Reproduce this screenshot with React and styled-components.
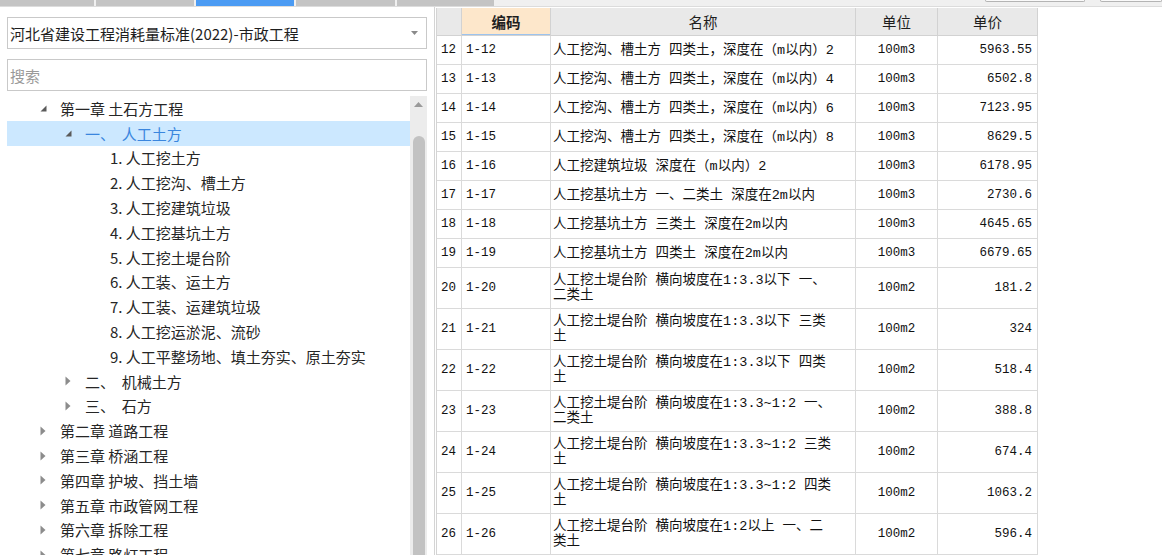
import React from 'react';
import styled, { createGlobalStyle } from 'styled-components';

const GlobalStyle = createGlobalStyle`
  html, body {
    margin: 0;
    padding: 0;
    background: #fff;
    overflow: hidden;
  }
  body {
    font-family: "Noto Sans CJK SC", "Noto Sans", sans-serif;
    color: #222;
  }
  #root {
    height: 555px;
  }
`;

const Page = styled.div`
  width: 1162px;
  height: 555px;
  display: flex;
  flex-direction: column;
  overflow: hidden;
`;

/* ---- top tab strip (only its bottom edge is visible) ---- */
const TabStrip = styled.div`
  flex: none;
  height: 6px;
  display: flex;
  gap: 2px;
  background: #f0f0f0;
  border-bottom: 1px solid #dcdcdc;
`;
const Tab = styled.div`
  width: ${p => p.$w}px;
  background: ${p => (p.$active ? '#4b9bf3' : '#c4c4c4')};
`;
const Spacer = styled.div`
  flex: 1;
`;
const ButtonStub = styled.div`
  width: ${p => p.$w}px;
  height: 1px;
  margin-left: ${p => p.$ml}px;
  border: 1px solid #b4b4b4;
  border-top: none;
  border-radius: 0 0 3px 3px;
  background: #fafafa;
`;

const Main = styled.div`
  flex: 1;
  min-height: 0;
  display: flex;
`;

/* ---- left: standard picker + chapter tree ---- */
const LeftPanel = styled.div`
  flex: none;
  width: 427px;
  padding: 10px 0 0 7px;
  border-right: 1px solid #d4d4d4;
  display: flex;
  flex-direction: column;
  overflow: hidden;
`;
const Field = styled.div`
  width: 420px;
  height: 32px;
  box-sizing: border-box;
  border: 1px solid #c9c9c9;
  display: flex;
  align-items: center;
  padding: 0 8px 0 2px;
  font-size: 15px;
  color: ${p => (p.$placeholder ? '#9a9a9a' : '#1e1e1e')};
  margin-bottom: 10px;
  white-space: nowrap;
`;
const FieldText = styled.span`
  flex: 1;
`;
const TreeArea = styled.div`
  flex: 1;
  min-height: 0;
  margin-top: -5px;
  display: flex;
`;
const Tree = styled.div`
  width: 403px;
  flex: none;
`;
const TreeRow = styled.div`
  height: 24.8px;
  display: flex;
  align-items: center;
  padding-left: ${p => 33 + p.$level * 25}px;
  background: ${p => (p.$selected ? '#cce8ff' : 'transparent')};
  color: ${p => (p.$selected ? '#3a86de' : '#262626')};
  font-size: 15px;
  white-space: pre;
`;
const Toggle = styled.span`
  width: 20px;
  flex: none;
  display: flex;
  align-items: center;
`;
const ScrollTrack = styled.div`
  width: 17px;
  flex: none;
  background: #ececec;
  display: flex;
  flex-direction: column;
  align-items: center;
  padding-top: 6px;
`;
const ScrollThumb = styled.div`
  margin-top: 29px;
  width: 12px;
  flex: 1;
  background: #c2c2c2;
  border-radius: 6px 6px 0 0;
`;

/* ---- right: quota table ---- */
const RightPanel = styled.div`
  flex: 1;
  padding: 1px 0 0 1px;
  background: #fff;
`;
const Table = styled.div`
  width: 602px;
  border-left: 1px solid #d4d4d4;
`;
const Row = styled.div`
  display: grid;
  grid-template-columns: 25px 89px 305px 82px 100px;
  height: ${p => p.$h}px;
`;
const HeadCell = styled.div`
  display: flex;
  align-items: center;
  justify-content: center;
  border-right: 1px solid #d2d2d2;
  border-bottom: 1px solid #d2d2d2;
  background: ${p => (p.$active ? '#fde7cb' : '#e9e9e9')};
  box-shadow: ${p => (p.$active ? 'inset 0 -1px 0 #9cc3ee' : 'none')};
  font-size: 14.5px;
  font-weight: ${p => (p.$active ? 700 : 400)};
  color: #1e1e1e;
`;
const Cell = styled.div`
  display: flex;
  align-items: center;
  justify-content: ${p => p.$align || 'flex-start'};
  padding: 0 ${p => p.$pr ?? 3}px 0 ${p => p.$pl ?? 3}px;
  border-right: 1px solid #dadada;
  border-bottom: 1px solid #dadada;
  font-family: "Liberation Mono", "Noto Sans CJK SC", monospace;
  font-size: ${p => p.$fs || 12.5}px;
  line-height: 15px;
  color: #111;
  white-space: pre-line;
  overflow: hidden;
`;

const DownCorner = () => (
  <svg width="7" height="7" viewBox="0 0 7 7">
    <polygon points="6.5,0.5 6.5,6.5 0.5,6.5" fill="#5a5a5a" />
  </svg>
);
const RightTri = () => (
  <svg width="6" height="10" viewBox="0 0 6 10">
    <polygon points="0.5,0.5 5.5,5 0.5,9.5" fill="#8c8c8c" />
  </svg>
);
const ComboArrow = () => (
  <svg width="7" height="4" viewBox="0 0 7 4">
    <polygon points="0,0 7,0 3.5,4" fill="#8a8a8a" />
  </svg>
);

const tabs = [94, 98, 98, 99, 97];

const tree = [
  { level: 0, open: true, text: '第一章 土石方工程' },
  { level: 1, open: true, selected: true, text: '一、  人工土方' },
  { level: 2, text: '1. 人工挖土方' },
  { level: 2, text: '2. 人工挖沟、槽土方' },
  { level: 2, text: '3. 人工挖建筑垃圾' },
  { level: 2, text: '4. 人工挖基坑土方' },
  { level: 2, text: '5. 人工挖土堤台阶' },
  { level: 2, text: '6. 人工装、运土方' },
  { level: 2, text: '7. 人工装、运建筑垃圾' },
  { level: 2, text: '8. 人工挖运淤泥、流砂' },
  { level: 2, text: '9. 人工平整场地、填土夯实、原土夯实' },
  { level: 1, open: false, text: '二、  机械土方' },
  { level: 1, open: false, text: '三、  石方' },
  { level: 0, open: false, text: '第二章 道路工程' },
  { level: 0, open: false, text: '第三章 桥涵工程' },
  { level: 0, open: false, text: '第四章 护坡、挡土墙' },
  { level: 0, open: false, text: '第五章 市政管网工程' },
  { level: 0, open: false, text: '第六章 拆除工程' },
  { level: 0, open: false, text: '第七章 路灯工程' },
];

const rows = [
  ['12', '1-12', '人工挖沟、槽土方 四类土，深度在（m以内）2', '100m3', '5963.55'],
  ['13', '1-13', '人工挖沟、槽土方 四类土，深度在（m以内）4', '100m3', '6502.8'],
  ['14', '1-14', '人工挖沟、槽土方 四类土，深度在（m以内）6', '100m3', '7123.95'],
  ['15', '1-15', '人工挖沟、槽土方 四类土，深度在（m以内）8', '100m3', '8629.5'],
  ['16', '1-16', '人工挖建筑垃圾 深度在（m以内）2', '100m3', '6178.95'],
  ['17', '1-17', '人工挖基坑土方 一、二类土 深度在2m以内', '100m3', '2730.6'],
  ['18', '1-18', '人工挖基坑土方 三类土 深度在2m以内', '100m3', '4645.65'],
  ['19', '1-19', '人工挖基坑土方 四类土 深度在2m以内', '100m3', '6679.65'],
  ['20', '1-20', '人工挖土堤台阶 横向坡度在1:3.3以下 一、\n二类土', '100m2', '181.2'],
  ['21', '1-21', '人工挖土堤台阶 横向坡度在1:3.3以下 三类\n土', '100m2', '324'],
  ['22', '1-22', '人工挖土堤台阶 横向坡度在1:3.3以下 四类\n土', '100m2', '518.4'],
  ['23', '1-23', '人工挖土堤台阶 横向坡度在1:3.3~1:2 一、\n二类土', '100m2', '388.8'],
  ['24', '1-24', '人工挖土堤台阶 横向坡度在1:3.3~1:2 三类\n土', '100m2', '674.4'],
  ['25', '1-25', '人工挖土堤台阶 横向坡度在1:3.3~1:2 四类\n土', '100m2', '1063.2'],
  ['26', '1-26', '人工挖土堤台阶 横向坡度在1:2以上 一、二\n类土', '100m2', '596.4'],
];

export default function App() {
  return (
    <Page>
      <GlobalStyle />
      <TabStrip>
        {tabs.map((w, i) => (
          <Tab key={i} $w={w} $active={i === 2} />
        ))}
        <Spacer />
        <ButtonStub $w={98} $ml={0} />
        <ButtonStub $w={60} $ml={13} />
      </TabStrip>
      <Main>
        <LeftPanel>
          <Field>
            <FieldText>河北省建设工程消耗量标准(2022)-市政工程</FieldText>
            <ComboArrow />
          </Field>
          <Field $placeholder>
            <FieldText>搜索</FieldText>
          </Field>
          <TreeArea>
            <Tree>
              {tree.map((n, i) => (
                <TreeRow key={i} $level={n.level} $selected={n.selected}>
                  <Toggle>
                    {n.open === true && <DownCorner />}
                    {n.open === false && <RightTri />}
                  </Toggle>
                  {n.text}
                </TreeRow>
              ))}
            </Tree>
            <ScrollTrack>
              <svg width="9" height="5" viewBox="0 0 9 5">
                <polygon points="4.5,0 9,5 0,5" fill="#9a9a9a" />
              </svg>
              <ScrollThumb />
            </ScrollTrack>
          </TreeArea>
        </LeftPanel>
        <RightPanel>
          <Table>
            <Row $h={28}>
              <HeadCell />
              <HeadCell $active>编码</HeadCell>
              <HeadCell>名称</HeadCell>
              <HeadCell>单位</HeadCell>
              <HeadCell>单价</HeadCell>
            </Row>
            {rows.map(r => (
              <Row key={r[0]} $h={r[2].includes('\n') ? 41 : 29}>
                <Cell $pl={4}>{r[0]}</Cell>
                <Cell $pl={4}>{r[1]}</Cell>
                <Cell $pl={2} $fs={13.5}>{r[2]}</Cell>
                <Cell $align="center">{r[3]}</Cell>
                <Cell $align="flex-end" $pr={5}>{r[4]}</Cell>
              </Row>
            ))}
          </Table>
        </RightPanel>
      </Main>
    </Page>
  );
}
